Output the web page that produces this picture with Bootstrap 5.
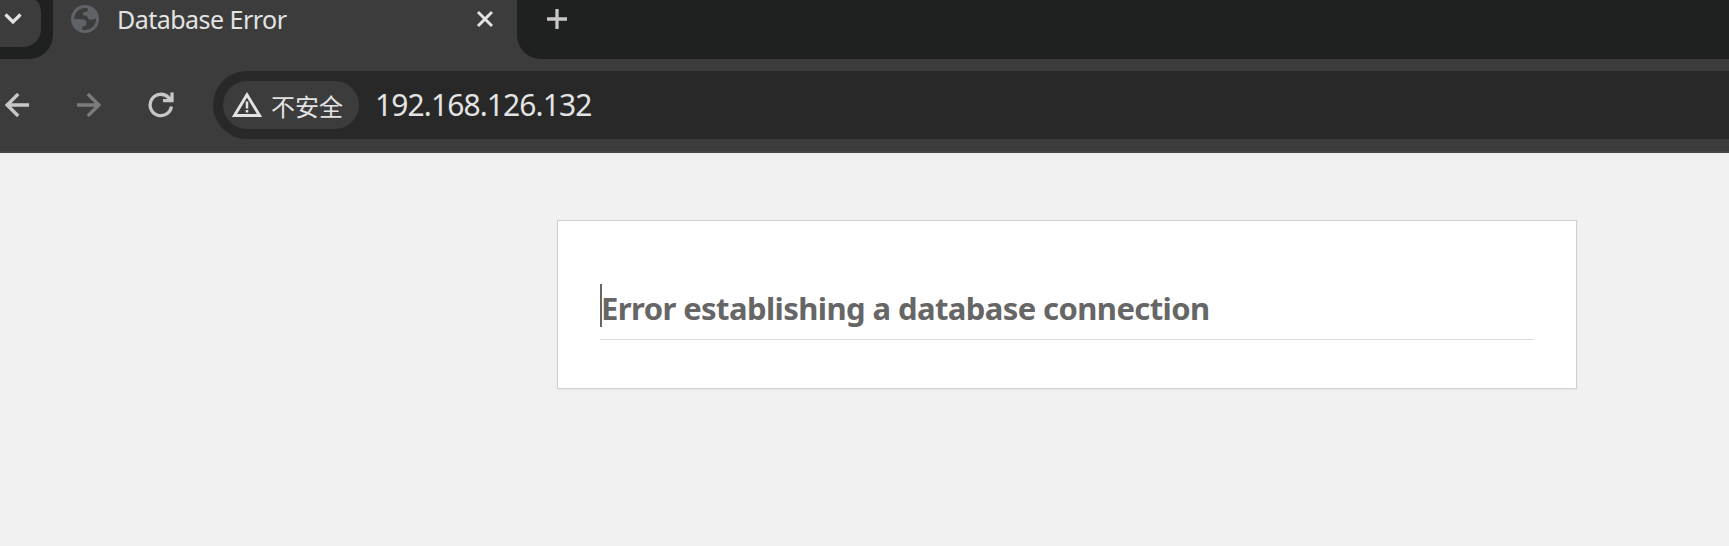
<!DOCTYPE html>
<html lang="zh-CN">
<head>
<meta charset="utf-8">
<title>Database Error</title>
<meta name="viewport" content="width=device-width, initial-scale=1">
<link href="https://cdn.jsdelivr.net/npm/bootstrap@5.3.0/dist/css/bootstrap.min.css" rel="stylesheet">
<style>
body{background:#f1f1f1;font-family:"Noto Sans","Noto Sans CJK SC",sans-serif;height:546px;overflow:hidden}
svg{display:block;flex:none}
.chrome{background:#3c3c3c;height:153px;border-bottom:2px solid #474747}
.tabstrip{height:59px}
.strip-start{width:53px;background:#1f2120;border-bottom-right-radius:24px}
.tab-search{width:41px;height:47px;background:#3c3c3c;border-radius:0 7px 18px 0/0 12px 18px 0;padding:13px 0 0 4px}
.tab-active{width:464px;height:38px;padding-left:18px;padding-right:23px}
.tab-title{color:#e3e3e3;font-size:25px;line-height:38px;margin-left:18px;white-space:nowrap;letter-spacing:-.52px}
.strip-rest{background:#1f2120;border-bottom-left-radius:24px;padding:9px 0 0 30px}
.toolbar{padding-top:12px}
.nav-icons{width:213px;height:68px;padding-left:5px}
.omnibox{height:68px;background:#282828;border-radius:34px 0 0 34px;padding-left:10px}
.site-chip{width:136px;height:48px;border-radius:24px;background:#3c3c3c;color:#e3e3e3;padding-left:9px}
.chip-label{font:24px/48px "Noto Sans CJK SC",sans-serif;margin-left:9px;white-space:nowrap;padding-top:2px}
.address{color:#e3e3e3;font-size:30px;line-height:68px;margin-left:16px;white-space:nowrap;letter-spacing:-.9px}
.error-box{width:1020px;height:169px;margin:67px 0 0 557px;background:#fff;border:1px solid #ccd0d4;box-shadow:0 1px 2px rgba(0,0,0,.05);padding:63px 42px 0}
.error-title{height:56px;border-bottom:1px solid #dadada;color:#666;font-size:31px;line-height:48px;letter-spacing:-.59px;font-weight:700;white-space:nowrap;margin:0}
.caret{width:2px;height:43px;background:#666;margin-right:-1px}
</style>
</head>
<body>
<header class="chrome">
  <div class="tabstrip d-flex">
    <div class="strip-start"><div class="tab-search">
      <svg width="18" height="12" viewBox="0 0 18 12" fill="none" stroke="#e3e3e3" stroke-width="3.200"><path d="M1.500 1.500 9 9l7.500-7.500"/></svg>
    </div></div>
    <div class="tab-active d-flex align-items-center">
      <svg width="28" height="28" viewBox="0 0 28 28"><circle cx="14" cy="14" r="14" fill="#5f6368"/><path fill="#3c3c3c" d="M3.200 14A11 11 0 0 1 17 3.400C17 6 16 7 13.500 7 11.500 7 11.500 10.500 13.500 10.500 16 10.500 16.500 11 16.500 12.500 17 14.500 19 15 21 14.800L25 13.500A11 11 0 0 1 11.300 24.700V21.500C14 21.500 15.500 20.500 15.500 18.500 15.500 15.500 14 14.300 11.500 14.200Z"/></svg>
      <span class="tab-title">Database Error</span>
      <svg class="ms-auto" width="18" height="18" viewBox="0 0 18 18" stroke="#e3e3e3" stroke-width="2.900"><path d="m2 2 14 14M16 2 2 16"/></svg>
    </div>
    <div class="strip-rest flex-grow-1">
      <svg width="20" height="20" viewBox="0 0 20 20" stroke="#c7c7c7" stroke-width="3.300"><path d="M10 0v20M0 10h20"/></svg>
    </div>
  </div>
  <div class="toolbar d-flex">
    <nav class="nav-icons d-flex align-items-center">
      <svg width="24" height="24" viewBox="0 0 24 24" fill="none" stroke="#c7c7c7" stroke-width="3.400"><path d="M24 12H2M13.200 1 2.200 12l11 11"/></svg>
      <svg style="margin-left:48px" width="24" height="24" viewBox="0 0 24 24" fill="none" stroke="#7b7b7b" stroke-width="3.400"><path d="M0 12h22M10.800 1l11 11-11 11"/></svg>
      <svg style="margin-left:47px" width="26" height="26" viewBox="0 0 26 26" fill="none" stroke="#c7c7c7" stroke-width="3.300"><path d="M23.400 14.500A10.700 10.700 0 1 1 20.500 5.500L23 8.500M24 .5V8.700h-9"/></svg>
    </nav>
    <div class="omnibox flex-grow-1 d-flex align-items-center">
      <div class="site-chip d-flex align-items-center">
        <svg width="30" height="26" viewBox="0 0 30 26" fill="none" stroke="#e3e3e3" stroke-width="2.900"><path d="M15 2.800 2.500 23.500h25Z"/><path stroke-width="2.500" d="M15 9.500v7M15 18v2.500"/></svg>
        <span class="chip-label">不安全</span>
      </div>
      <span class="address">192.168.126.132</span>
    </div>
  </div>
</header>
<main>
  <section class="error-box">
    <h1 class="error-title d-flex"><span class="caret"></span><span>Error establishing a database connection</span></h1>
  </section>
</main>
<script src="https://cdn.jsdelivr.net/npm/bootstrap@5.3.0/dist/js/bootstrap.bundle.min.js"></script>
</body>
</html>
